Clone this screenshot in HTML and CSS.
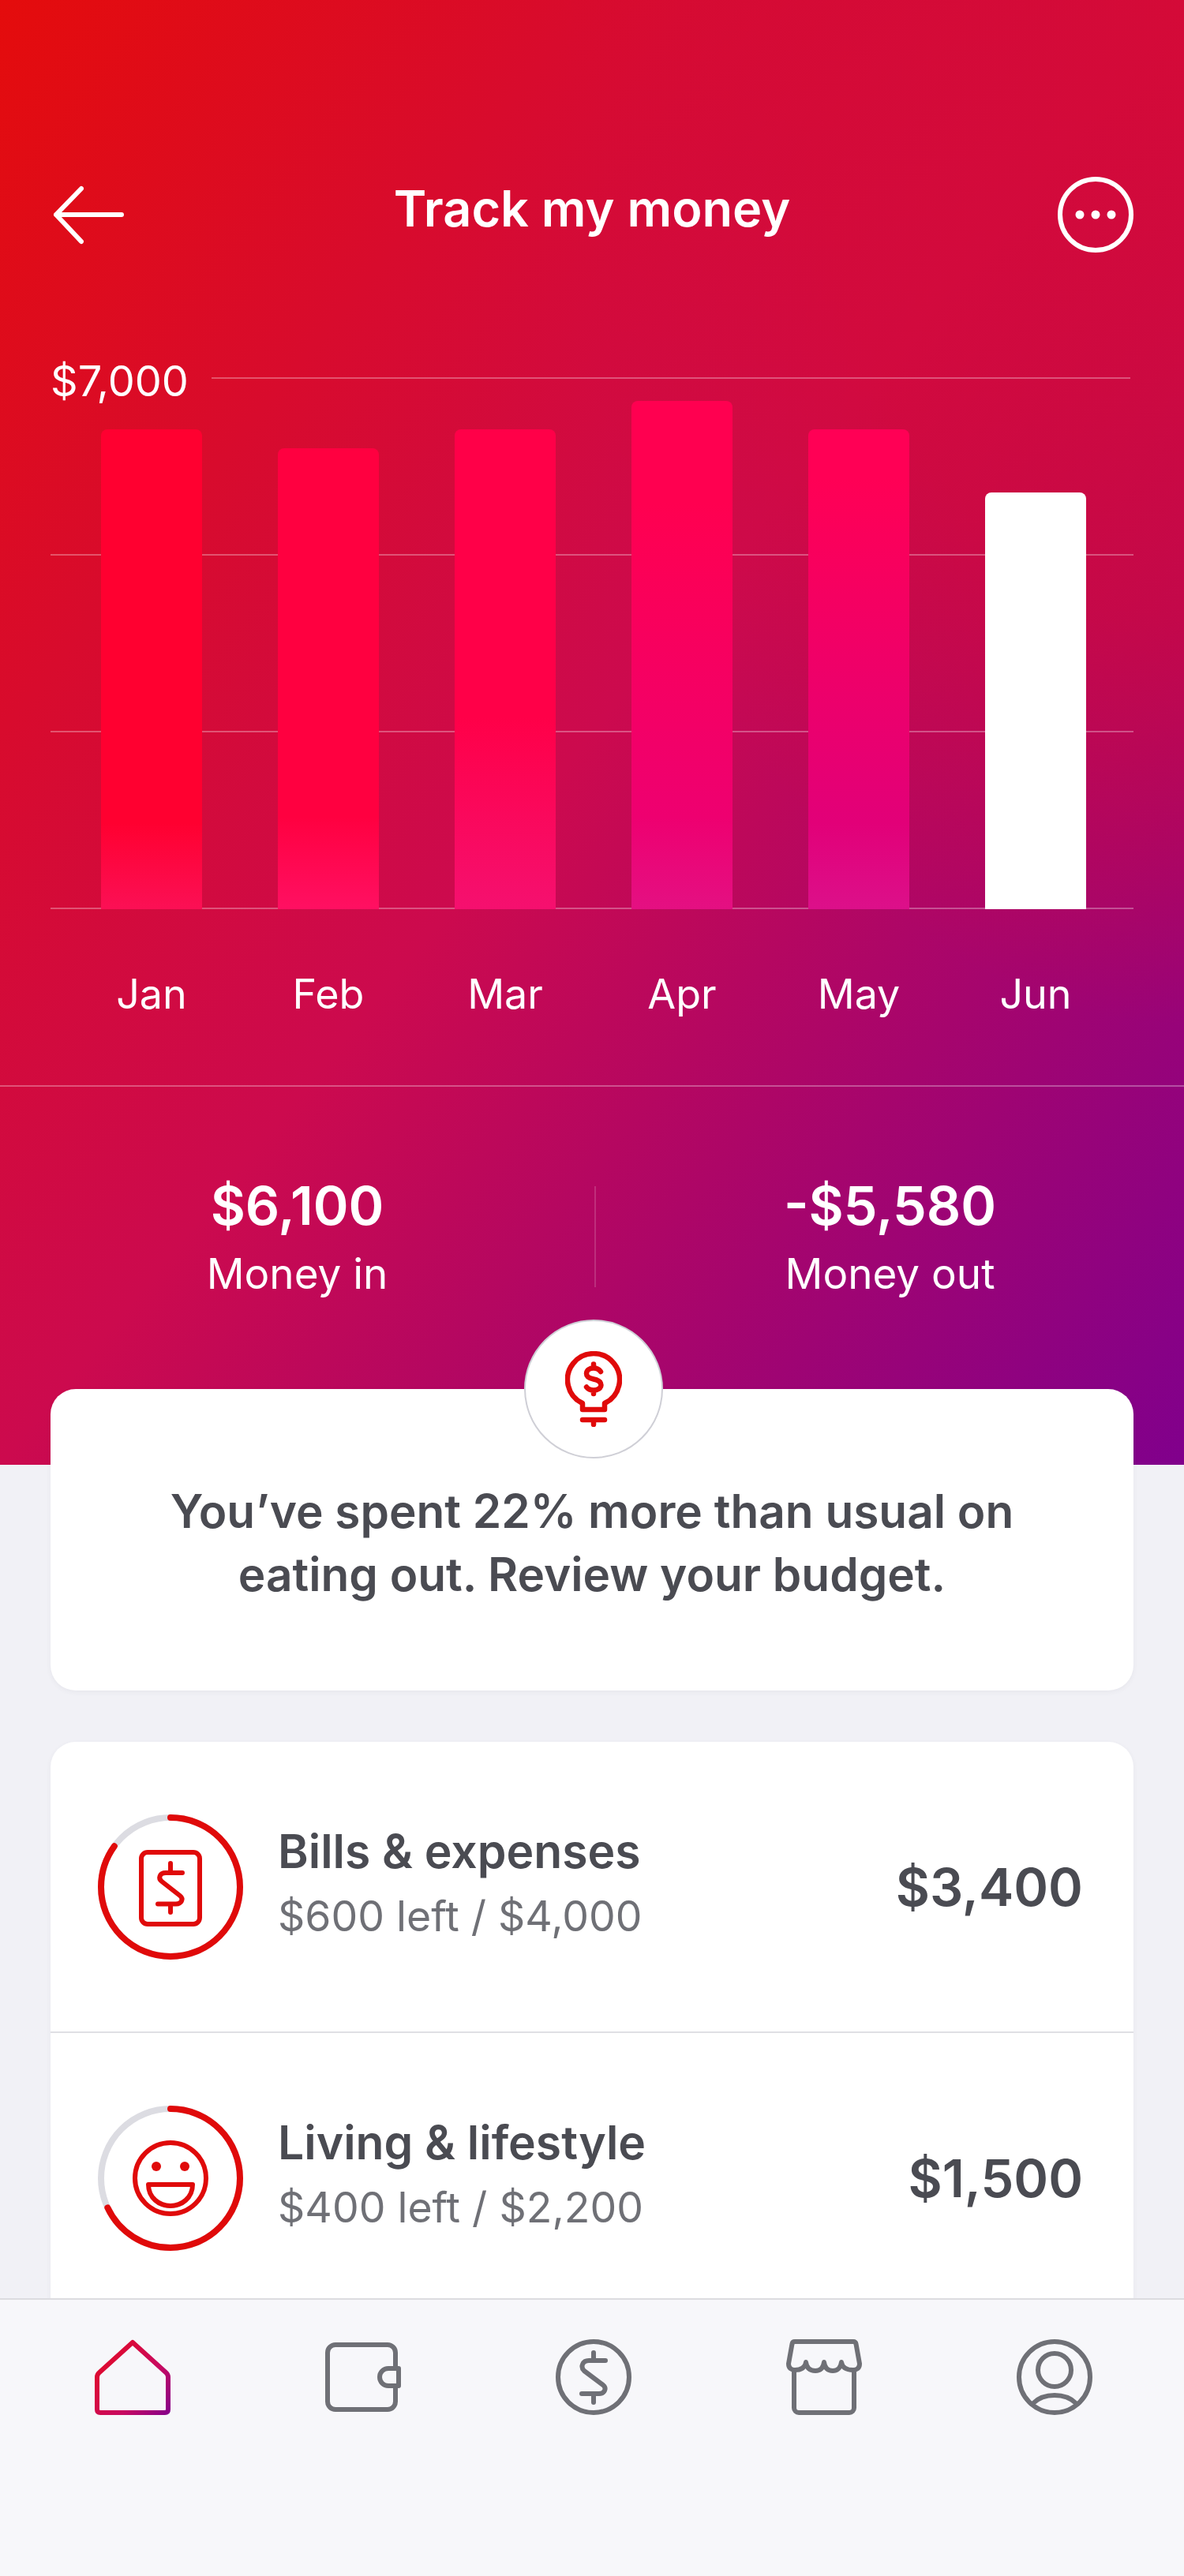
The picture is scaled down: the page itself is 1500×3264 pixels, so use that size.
FILE: index.html
```html
<!DOCTYPE html>
<html lang="en">
<head>
    <meta charset="UTF-8">
    <meta name="viewport" content="width=device-width, initial-scale=1.0">
    <title>Track my money</title>
    <link rel="stylesheet" href="styles.css">
</head>
<body>

<div class="screen">

    <!-- Gradient section with chart and totals -->
    <section class="hero">
        <header class="top-bar">
            <svg class="icon-white" width="96" height="96" viewBox="0 0 96 96">
                <path d="M7 48 H90 M39 15 L7 48 L39 82"/>
            </svg>
            <h1 class="page-title">Track my money</h1>
            <svg class="icon-white" width="96" height="96" viewBox="0 0 96 96">
                <circle cx="48" cy="48" r="45"/>
                <circle class="dot" cx="28" cy="48" r="5.5"/>
                <circle class="dot" cx="48" cy="48" r="5.5"/>
                <circle class="dot" cx="68" cy="48" r="5.5"/>
            </svg>
        </header>

        <div class="chart">
            <div class="grid-lines">
                <div class="grid-top">
                    <span class="axis-label">$7,000</span>
                    <span class="grid-line"></span>
                </div>
                <span class="grid-line"></span>
                <span class="grid-line"></span>
                <span class="grid-line"></span>
            </div>
            <div class="bars">
                <div class="bar bar-jan" style="height: 608px"></div>
                <div class="bar bar-feb" style="height: 584px"></div>
                <div class="bar bar-mar" style="height: 608px"></div>
                <div class="bar bar-apr" style="height: 644px"></div>
                <div class="bar bar-may" style="height: 608px"></div>
                <div class="bar bar-jun" style="height: 528px"></div>
            </div>
        </div>

        <div class="months">
            <span>Jan</span>
            <span>Feb</span>
            <span>Mar</span>
            <span>Apr</span>
            <span>May</span>
            <span>Jun</span>
        </div>

        <div class="totals">
            <div class="total total-in">
                <strong>$6,100</strong>
                <span>Money in</span>
            </div>
            <div class="total total-out">
                <strong>-$5,580</strong>
                <span>Money out</span>
            </div>
        </div>
    </section>

    <!-- Insight card -->
    <section class="insight card">
        <div class="insight-badge">
            <svg class="icon-red" width="72" height="96" viewBox="0 0 72 96">
                <path d="M22 66 A33 33 0 1 1 50 66 V74 H22 Z"/>
                <path d="M22 87 H50 M36 87 V93"/>
                <path d="M45 26 C43 23 40 21.500 36 21.500 C31 21.500 27 24 27 28.500 C27 33 31 34.500 36 35.500 C41 36.500 45.500 38 45.500 43 C45.500 47 41 49.500 36 49.500 C32 49.500 29 48 27 45.500 M36 16.500 V21 M36 50 V54"/>
            </svg>
        </div>
        <p>You’ve spent 22% more than usual on<br>eating out. Review your budget.</p>
    </section>

    <!-- Budget list -->
    <section class="budgets card">
        <div class="budget-row">
            <svg class="ring" width="184" height="184" viewBox="0 0 184 184">
                <circle class="ring-track" cx="92" cy="92" r="88"/>
                <circle class="ring-value" cx="92" cy="92" r="88" pathLength="100" stroke-dasharray="85 100" transform="rotate(-90 92 92)"/>
                <rect x="55" y="48" width="74" height="91" rx="8"/>
                <path d="M107 74 H86 C78 74 76 81 81 85 L104 103 C109 107 106 113.500 99 113.500 H76 M92 62 V74 M92 114 V124"/>
            </svg>
            <div class="budget-text">
                <h2>Bills &amp; expenses</h2>
                <p>$600 left / $4,000</p>
            </div>
            <div class="budget-amount">$3,400</div>
        </div>
        <div class="budget-row">
            <svg class="ring" width="184" height="184" viewBox="0 0 184 184">
                <circle class="ring-track" cx="92" cy="92" r="88"/>
                <circle class="ring-value" cx="92" cy="92" r="88" pathLength="100" stroke-dasharray="68 100" transform="rotate(-90 92 92)"/>
                <circle cx="92" cy="92" r="45"/>
                <circle class="eye" cx="74" cy="77" r="6"/>
                <circle class="eye" cx="110" cy="77" r="6"/>
                <path d="M64 100 H120 C120 117 106 127 92 127 C78 127 64 117 64 100 Z"/>
            </svg>
            <div class="budget-text">
                <h2>Living &amp; lifestyle</h2>
                <p>$400 left / $2,200</p>
            </div>
            <div class="budget-amount">$1,500</div>
        </div>
    </section>

    <!-- Bottom navigation -->
    <nav class="bottom-nav">
        <svg class="icon-nav" width="96" height="96" viewBox="0 0 96 96">
            <defs>
                <linearGradient id="homeGradient" gradientUnits="userSpaceOnUse" x1="0" y1="20" x2="96" y2="96">
                    <stop offset="0" stop-color="#e30a25"/>
                    <stop offset="0.6" stop-color="#c80a60"/>
                    <stop offset="1" stop-color="#83008c"/>
                </linearGradient>
            </defs>
            <path class="home" d="M48 4 L90 42 Q93 44.500 93 48 V89 Q93 93 89 93 H7 Q3 93 3 89 V48 Q3 44.500 6 42 Z"/>
        </svg>
        <svg class="icon-nav" width="96" height="96" viewBox="0 0 96 96">
            <path d="M89 34 V17 A10 10 0 0 0 79 7 H13 A10 10 0 0 0 3 17 V79 A10 10 0 0 0 13 89 H79 A10 10 0 0 0 89 79 V62"/>
            <path d="M93 37 H80 A11 11 0 0 0 80 59 H93 Z"/>
        </svg>
        <svg class="icon-nav" width="96" height="96" viewBox="0 0 96 96">
            <circle cx="48" cy="48" r="45"/>
            <path d="M63 27 H42 C34 27 31 35 36 40 L60 58 C65 62 62 69 55 69 H33 M48 17 V27 M48 69 V80"/>
        </svg>
        <svg class="icon-nav" width="96" height="96" viewBox="0 0 96 96">
            <path d="M11 3 H85 Q88 3 88.500 6 L93 31 C93 37 89 39 85 39 C77 39 71 37 70 29 C69 37 64 40 59 40 C53 40 49 37 48 29 C47 37 43 40 37 40 C31 40 26 37 25 29 C24 37 18 39 11 39 C7 39 3 37 3 31 L7.500 6 Q8 3 11 3 Z"/>
            <path d="M10 39 V87 A6 6 0 0 0 16 93 H80 A6 6 0 0 0 86 87 V39"/>
        </svg>
        <svg class="icon-nav" width="96" height="96" viewBox="0 0 96 96">
            <circle cx="48" cy="48" r="45"/>
            <circle cx="48" cy="39" r="21"/>
            <path d="M21 81 C28 74 38 71 48 71 C58 71 68 74 75 81"/>
        </svg>
    </nav>

</div>

</body>
</html>
```

FILE: styles.css
```css
* {
    box-sizing: border-box;
}

body {
    margin: 0;
    background-color: #f1f1f6;
    font-family: 'Inter', 'Liberation Sans', sans-serif;
    color: #4a4b52;
}

.screen {
    position: relative;
    height: 3264px;
    overflow: hidden;
}

.card {
    margin: 0 64px;
    background-color: #ffffff;
    border-radius: 32px;
    box-shadow: 0 2px 6px rgba(60, 60, 80, 0.06);
}

/* Gradient section */
.hero {
    height: 1856px;
    padding-top: 224px;
    color: #ffffff;
    background:
        radial-gradient(800px 1300px at 100% 0, rgba(214, 10, 50, 0.8), rgba(214, 10, 50, 0.55) 60%, rgba(214, 10, 50, 0)),
        linear-gradient(to bottom right, #e40c0c, #cc0a4e 50%, #80008c);
}

.top-bar {
    display: flex;
    justify-content: space-between;
    align-items: center;
    padding: 0 64px;
}

.page-title {
    margin: -16px 0 0;
    font-size: 63px;
    line-height: 96px;
    font-weight: 600;
}

.icon-white {
    fill: none;
    stroke: #ffffff;
    stroke-width: 6;
    stroke-linecap: round;
    stroke-linejoin: round;
}

.icon-white .dot {
    fill: #ffffff;
    stroke: none;
}

/* Chart */
.chart {
    display: grid;
    height: 674px;
    margin: 158px 64px 0;
}

.grid-lines, .bars {
    grid-area: 1 / 1;
}

.grid-lines {
    display: flex;
    flex-direction: column;
    justify-content: space-between;
}

.grid-line {
    display: block;
    flex: 1;
    height: 2px;
    background-color: rgba(255, 255, 255, 0.3);
}

.grid-lines > .grid-line {
    flex: none;
}

.grid-top {
    display: flex;
    align-items: center;
    height: 2px;
    padding-right: 4px;
}

.axis-label {
    width: 204px;
    margin-top: 8px;
    font-size: 54px;
    line-height: 2px;
}

.bars {
    display: flex;
    align-items: flex-end;
    gap: 96px;
    padding-left: 64px;
}

.bar {
    width: 128px;
    border-radius: 8px 8px 0 0;
}

.bar-jan {
    background: linear-gradient(#ff0030 82%, #fb1055);
}

.bar-feb {
    background: linear-gradient(#ff0040 80%, #ff1062);
}

.bar-mar {
    background: linear-gradient(#ff0048 60%, #f5106f);
}

.bar-apr {
    background: linear-gradient(#ff0050 20%, #ee0070 82%, #e41082);
}

.bar-may {
    background: linear-gradient(#ff0055 10%, #e20078 82%, #dc108a);
}

.bar-jun {
    background: #ffffff;
}

.months {
    display: flex;
    margin-top: 76px;
    padding-left: 80px;
    font-size: 52px;
    line-height: 64px;
}

.months span {
    width: 224px;
    text-align: center;
}

/* Money in / out */
.totals {
    display: flex;
    margin-top: 83px;
    padding-top: 126px;
    border-top: 2px solid rgba(255, 255, 255, 0.3);
}

.total {
    flex: 1;
    display: flex;
    flex-direction: column;
    align-items: center;
    height: 128px;
}

.total-in {
    flex: none;
    width: 753px;
}

.total-out {
    border-left: 2px solid rgba(255, 255, 255, 0.16);
}

.total strong {
    margin-top: -18px;
    font-size: 68px;
    line-height: 84px;
    font-weight: 600;
}

.total span {
    margin-top: 11px;
    font-size: 53px;
    line-height: 68px;
}

/* Insight card */
.insight {
    position: relative;
    height: 382px;
    margin-top: -96px;
    padding-top: 115px;
    text-align: center;
}

.insight p {
    margin: 0;
    font-size: 58.5px;
    line-height: 80px;
    font-weight: 600;
}

.insight-badge {
    position: absolute;
    top: -88px;
    left: 600px;
    display: flex;
    justify-content: center;
    align-items: center;
    width: 176px;
    height: 176px;
    background-color: #ffffff;
    border: 2px solid #cfcfd6;
    border-radius: 50%;
}

.icon-red {
    fill: none;
    stroke: #e00a0a;
    stroke-width: 6.5;
    stroke-linecap: round;
    stroke-linejoin: round;
}

/* Budget list */
.budgets {
    margin-top: 65px;
}

.budget-row {
    display: flex;
    align-items: center;
    height: 369px;
    padding: 0 64px 0 60px;
    border-bottom: 2px solid #dfdfe4;
}

.ring {
    flex: none;
    fill: none;
    stroke: #e00a0a;
    stroke-width: 6;
    stroke-linecap: round;
    stroke-linejoin: round;
}

.ring .ring-track {
    stroke: #dcdce2;
    stroke-width: 8;
}

.ring .ring-value {
    stroke-width: 8;
}

.ring .eye {
    fill: #e00a0a;
    stroke: none;
}

.budget-text {
    flex: 1;
    margin-left: 44px;
    padding-bottom: 10px;
}

.budget-text h2 {
    margin: 0;
    font-size: 58.8px;
    line-height: 76px;
    font-weight: 600;
}

.budget-text p {
    margin: 8px 0 0;
    font-size: 53.5px;
    line-height: 72px;
    color: #6f7076;
}

.budget-amount {
    font-size: 66.5px;
    font-weight: 600;
}

/* Bottom navigation */
.bottom-nav {
    position: absolute;
    left: 0;
    right: 0;
    bottom: 0;
    display: flex;
    justify-content: space-between;
    height: 352px;
    padding: 50px 116px 0 120px;
    background-color: #f7f7fa;
    border-top: 2px solid #dcdce0;
}

.icon-nav {
    fill: none;
    stroke: #6f7076;
    stroke-width: 6;
    stroke-linecap: round;
    stroke-linejoin: round;
}

.icon-nav .home {
    stroke: url(#homeGradient);
}
```
